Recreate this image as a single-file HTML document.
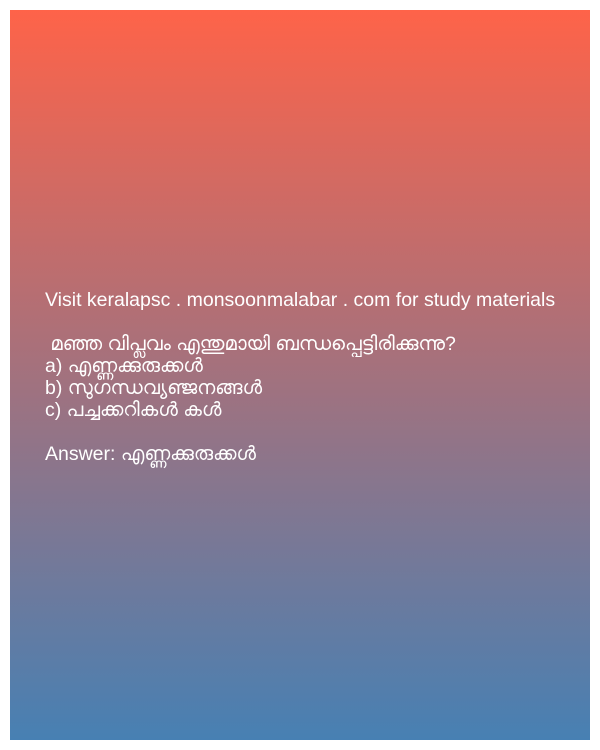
<!DOCTYPE html>
<html><head><meta charset="utf-8"><style>
html,body{margin:0;padding:0;width:600px;height:750px;background:#fff;overflow:hidden}
.box{position:absolute;left:10px;top:10px;width:580px;height:730px;background:linear-gradient(to bottom,#fe6349,#4780b3)}
.t{position:absolute;left:45px;top:289px;color:#fff;font-family:"Liberation Sans","DejaVu Sans",sans-serif;font-size:19.5px;line-height:22px;white-space:pre}
</style></head><body>
<div class="box"></div>
<div class="t">Visit keralapsc . monsoonmalabar . com for study materials

 മഞ്ഞ വിപ്ലവം എന്തുമായി ബന്ധപ്പെട്ടിരിക്കുന്നു?
a) എണ്ണക്കുരുക്കൾ
b) സുഗന്ധവ്യഞ്ജനങ്ങൾ
c) പച്ചക്കറികൾ കൾ

Answer: എണ്ണക്കുരുക്കൾ</div>
</body></html>
